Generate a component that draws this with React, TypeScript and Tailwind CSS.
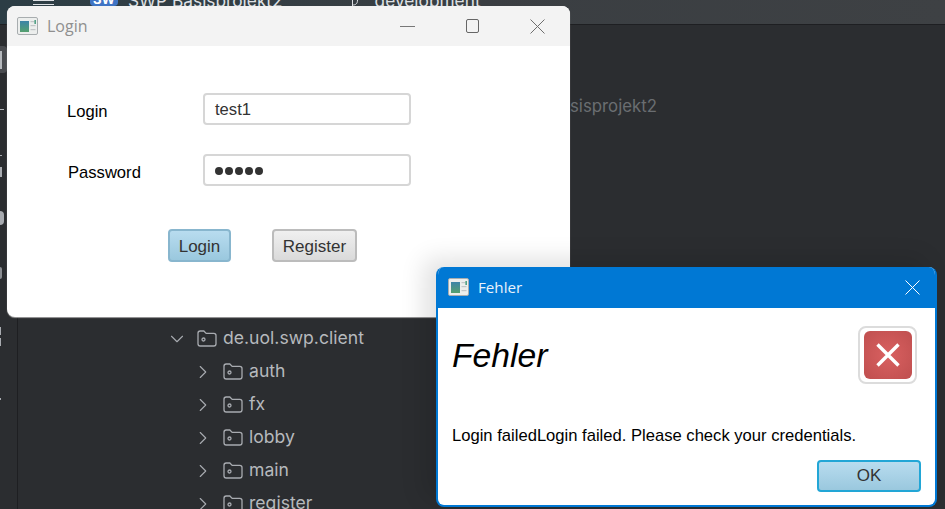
import { ChevronDown, ChevronRight } from "lucide-react";

function AppIcon() {
  return (
    <svg width="21" height="18" viewBox="0 0 21 18" className="shrink-0">
      <defs>
        <linearGradient id="appPanel" x1="0" y1="0" x2="0" y2="1">
          <stop offset="0" stopColor="#3d84a8" />
          <stop offset="1" stopColor="#55a06f" />
        </linearGradient>
      </defs>
      <rect x="0.5" y="0.5" width="20" height="17" rx="1.5" fill="#eceeed" stroke="#a8adaf" />
      <rect x="3" y="4" width="9" height="11" fill="url(#appPanel)" />
      <rect x="13.5" y="4" width="4" height="1.2" fill="#c2c6c8" />
      <rect x="13.5" y="8" width="5" height="1.2" fill="#c2c6c8" />
      <rect x="13.5" y="12" width="5" height="1.2" fill="#c2c6c8" />
      <rect x="17.5" y="3" width="1.3" height="4" fill="#2f8f6f" />
    </svg>
  );
}

function PackageFolder() {
  return (
    <svg width="20" height="17" viewBox="0 0 20 17" fill="none" stroke="#a8abb0" strokeWidth="1.3" className="shrink-0">
      <path d="M1 3.2C1 1.9 1.9 1 3.2 1h3.6l2.4 2.4h7.6c1.2 0 2.2 1 2.2 2.2v8.2c0 1.2-1 2.2-2.2 2.2H3.2C1.9 16 1 15 1 13.8z" />
      <circle cx="6.5" cy="9.5" r="1.5" />
    </svg>
  );
}

function CloseGlyph({ size, className }: { size: number; className: string }) {
  return (
    <svg width={size} height={size} viewBox="0 0 15 15" fill="none" stroke="currentColor" strokeWidth="1" className={className}>
      <path d="M0.5 0.5l14 14M14.5 0.5l-14 14" />
    </svg>
  );
}

function TreeRow({ label, open, indent }: { label: string; open?: boolean; indent: string }) {
  return (
    <div className={`flex h-[33px] items-center ${indent}`}>
      {open ? (
        <ChevronDown size={22} strokeWidth={1.2} className="-ml-[3px] mr-[9px] text-[#a8abb0]" />
      ) : (
        <ChevronRight size={22} strokeWidth={1.2} className="-ml-[3px] mr-[9px] text-[#a8abb0]" />
      )}
      <PackageFolder />
      <span className="ml-[6px] text-[17.6px] text-[#b6b9bd]">{label}</span>
    </div>
  );
}

export default function App() {
  return (
    <div className="relative h-[509px] w-[945px] overflow-hidden bg-[#2b2d30] font-['Inter',sans-serif]">
      {/* IDE title bar */}
      <div className="flex h-[25px] items-start overflow-hidden border-b border-[#1e1f22] bg-gradient-to-r from-[#2c3d45] via-[#3a3e42] to-[#3e4144]">
        <div className="ml-[33px] flex w-[21px] flex-col gap-[3px]">
          <span className="h-[1px] bg-[#dfe1e5]" />
          <span className="h-[1px] bg-[#dfe1e5]" />
        </div>
        <div className="-mt-[8px] ml-[36px] flex h-[14px] w-[28px] items-end justify-center rounded-b-sm bg-[#3f74c4] text-[13px] font-bold leading-[14px] text-white">
          SW
        </div>
        <span className="-mt-[12px] ml-[10px] text-[17.3px] text-[#dfe1e5]">SWP Basisprojekt2</span>
        <svg width="16" height="8" viewBox="0 0 16 8" fill="none" stroke="#dfe1e5" strokeWidth="1" className="ml-[61px]">
          <path d="M8.5 0v7M8.5 5c3 0 5-1 5-5" />
        </svg>
        <span className="-mt-[12px] ml-[15px] text-[17.3px] text-[#dfe1e5]">development</span>
      </div>

      <div className="flex h-[484px]">
        {/* tool window strip */}
        <div className="flex w-[18px] shrink-0 flex-col items-start border-r border-[#1e1f22] bg-[#2b2d30]">
          <div className="mt-[21px] flex h-[27px] w-[7px] items-center rounded-r bg-[#4a4c50]">
            <span className="h-[18px] w-[2px] bg-[#b6b9bd]" />
          </div>
          <span className="mt-[36px] h-[1px] w-[4px] bg-[#b6b9bd]" />
          <span className="mt-[45px] h-[1px] w-[2px] bg-[#a8abb0]" />
          <span className="mt-[11px] h-[10px] w-[2px] bg-[#a8abb0]" />
          <span className="mt-[34px] h-[14px] w-[4px] rounded-r-full bg-[#a8abb0]" />
          <span className="mt-[42px] h-[12px] w-[2px] rounded-r-full bg-[#8a8d92]" />
          <span className="mt-[48px] h-[8px] w-[1px] bg-[#a8abb0]" />
          <span className="mt-[3px] h-[8px] w-[1px] bg-[#a8abb0]" />
          <span className="mt-[52px] h-[2px] w-[1px] bg-[#a8abb0]" />
        </div>

        {/* project tree */}
        <div className="flex-1 pl-[151px] pt-[69px]">
          <div className="ml-[401px] text-[16.8px] leading-[24px] text-[#6a6d71]">sisprojekt2</div>
          <div className="mt-[204px]">
            <TreeRow label="de.uol.swp.client" open indent="" />
            <TreeRow label="auth" indent="ml-[26px]" />
            <TreeRow label="fx" indent="ml-[26px]" />
            <TreeRow label="lobby" indent="ml-[26px]" />
            <TreeRow label="main" indent="ml-[26px]" />
            <TreeRow label="register" indent="ml-[26px]" />
          </div>
        </div>
      </div>

      {/* Login window */}
      <div className="absolute left-[7px] top-[6px] flex h-[311px] w-[563px] flex-col overflow-hidden rounded-lg bg-white shadow-[0_1px_1px_rgba(170,170,170,0.9)]">
        <div className="flex h-[40px] shrink-0 items-center bg-[#f3f3f3] pl-[10px]">
          <AppIcon />
          <span className="ml-[9px] font-['Open_Sans',sans-serif] text-[16px] text-[#8f8f8f]">Login</span>
          <div className="ml-auto flex items-center pr-[25px] text-[#6e6e6e]">
            <span className="h-[1px] w-[15px] bg-[#777]" />
            <span className="ml-[51px] h-[14px] w-[13px] rounded-[2px] border border-[#666]" />
            <CloseGlyph size={15} className="ml-[51px]" />
          </div>
        </div>
        <div className="flex-1 pt-[47px] font-['Liberation_Sans',sans-serif]">
          <div className="flex h-[32px] items-center pl-[60px]">
            <span className="w-[136px] pt-[6px] text-[16.6px] text-black">Login</span>
            <div className="flex h-[32px] w-[208px] items-center rounded-[4px] border-2 border-[#d6d6d6] bg-white pl-[10px] pt-[2px] text-[16.6px] text-[#333]">
              test1
            </div>
          </div>
          <div className="mt-[29px] flex h-[32px] items-center pl-[61px]">
            <span className="w-[135px] pt-[6px] text-[16.6px] text-black">Password</span>
            <div className="flex h-[32px] w-[208px] items-center gap-[2px] rounded-[4px] border-2 border-[#d6d6d6] bg-white pl-[10px] pt-[1px]">
              {[0, 1, 2, 3, 4].map((i) => (
                <span key={i} className="h-[8px] w-[8px] rounded-full bg-[#333]" />
              ))}
            </div>
          </div>
          <div className="mt-[43px] flex pl-[161px]">
            <button className="flex h-[33px] w-[63px] items-center justify-center rounded-[4px] border-2 border-[#88b6ce] bg-gradient-to-b from-[#b8dcef] to-[#9ac8de] pt-[3px] text-[17px] text-[#333]">
              Login
            </button>
            <button className="ml-[41px] flex h-[33px] w-[85px] items-center justify-center rounded-[4px] border-2 border-[#bcbcbc] bg-gradient-to-b from-[#f0f0f0] to-[#dadada] pt-[3px] text-[17px] text-[#333]">
              Register
            </button>
          </div>
        </div>
      </div>

      {/* Fehler dialog */}
      <div className="absolute left-[436px] top-[267px] flex h-[240px] w-[501px] flex-col overflow-hidden rounded-lg border-2 border-t-0 border-[#0078d4] bg-white shadow-[-12px_-8px_24px_rgba(0,0,0,0.12)]">
        <div className="flex h-[41px] shrink-0 items-center justify-between bg-[#0078d4] pl-[10px] pr-[15px]">
          <div className="flex items-center">
            <AppIcon />
            <span className="ml-[9px] font-['Open_Sans',sans-serif] text-[15.2px] text-[#e8f2fb]">Fehler</span>
          </div>
          <CloseGlyph size={15} className="text-white" />
        </div>
        <div className="flex flex-1 flex-col font-['Liberation_Sans',sans-serif]">
          <div className="flex items-start justify-between pl-[14px] pr-[18px] pt-[18px]">
            <span className="mt-[7px] text-[33.7px] italic leading-[44px] text-black">Fehler</span>
            <div className="flex h-[58px] w-[59px] items-center justify-center rounded-[8px] border-2 border-[#dcdcdc] bg-white">
              <div className="flex h-[48px] w-[48px] items-center justify-center rounded-[6px] bg-[radial-gradient(circle,#d96060,#bf4f4f)]">
                <svg width="26" height="26" viewBox="0 0 26 26" fill="none" stroke="white" strokeWidth="3.4">
                  <path d="M2.5 2.5l21 21M23.5 2.5l-21 21" />
                </svg>
              </div>
            </div>
          </div>
          <p className="ml-[14px] mt-[40px] text-[16.6px] text-black">Login failedLogin failed. Please check your credentials.</p>
          <div className="flex justify-end pr-[14px] pt-[11px]">
            <button className="flex h-[32px] w-[104px] items-center justify-center rounded-[4px] border-2 border-[#22a6d6] bg-gradient-to-b from-[#b8dcef] to-[#9ac8de] text-[17px] text-[#333]">
              OK
            </button>
          </div>
        </div>
      </div>
    </div>
  );
}
